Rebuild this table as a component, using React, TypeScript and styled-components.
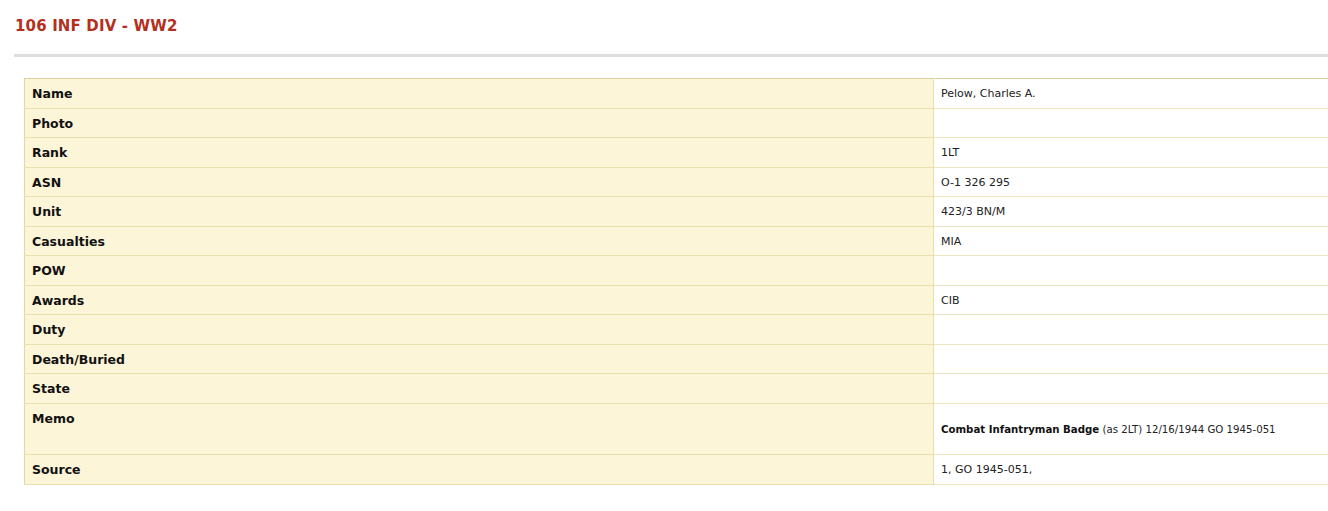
import React from "react";
import styled, { createGlobalStyle } from "styled-components";

const Global = createGlobalStyle`
  html, body { margin: 0; padding: 0; background: #fff; overflow: hidden; }
  body { font-family: Verdana, "DejaVu Sans", sans-serif; color: #111; }
`;

const Page = styled.div`
  width: 1328px;
  padding-top: 16px;
`;

const Header = styled.div`
  margin-left: 14px;
  padding-left: 1px;
  height: 38px;
  border-bottom: 3px solid #dedede;
`;

const Title = styled.h1`
  margin: 0;
  font-size: 15px;
  font-weight: bold;
  color: #b3301f;
  line-height: 20px;
  letter-spacing: 0.15px;
`;

const Table = styled.table`
  margin: 21px 0 0 24px;
  width: 1320px;
  border-collapse: collapse;
  table-layout: fixed;
  border-top: 1px solid #d9cf9f;
  border-left: 1px solid #e2d6a4;
`;

const Row = styled.tr<{ $tall?: boolean }>`
  height: ${(p) => (p.$tall ? "51px" : "29.55px")};
`;

const Label = styled.td`
  width: 894px;
  background: #fdf5d8;
  border-bottom: 1px solid #eadfae;
  border-right: 1px solid #eadfae;
  padding: 7px 7px 0 7px;
  vertical-align: top;
  font-size: 12.5px;
  font-weight: bold;
  line-height: 16px;
  color: #111;
`;

const Value = styled.td<{ $small?: boolean }>`
  background: #fff;
  border-bottom: 1px solid #eee5c0;
  padding: 2px 7px 0 7px;
  vertical-align: middle;
  font-size: ${(p) => (p.$small ? "10.2px" : "11px")};
  color: #222;
  line-height: 14px;
`;

const Strong = styled.b`
  font-weight: bold;
  color: #111;
`;

const rows: [string, React.ReactNode][] = [
  ["Name", "Pelow, Charles A."],
  ["Photo", ""],
  ["Rank", "1LT"],
  ["ASN", "O-1 326 295"],
  ["Unit", "423/3 BN/M"],
  ["Casualties", "MIA"],
  ["POW", ""],
  ["Awards", "CIB"],
  ["Duty", ""],
  ["Death/Buried", ""],
  ["State", ""],
];

export default function App() {
  return (
    <Page>
      <Global />
      <Header>
        <Title>106 INF DIV - WW2</Title>
      </Header>
      <Table>
        <tbody>
          {rows.map(([k, v]) => (
            <Row key={k}>
              <Label>{k}</Label>
              <Value>{v}</Value>
            </Row>
          ))}
          <Row $tall>
            <Label>Memo</Label>
            <Value $small>
              <Strong>Combat Infantryman Badge</Strong> (as 2LT) 12/16/1944 GO 1945-051
            </Value>
          </Row>
          <Row>
            <Label>Source</Label>
            <Value>1, GO 1945-051,</Value>
          </Row>
        </tbody>
      </Table>
    </Page>
  );
}
